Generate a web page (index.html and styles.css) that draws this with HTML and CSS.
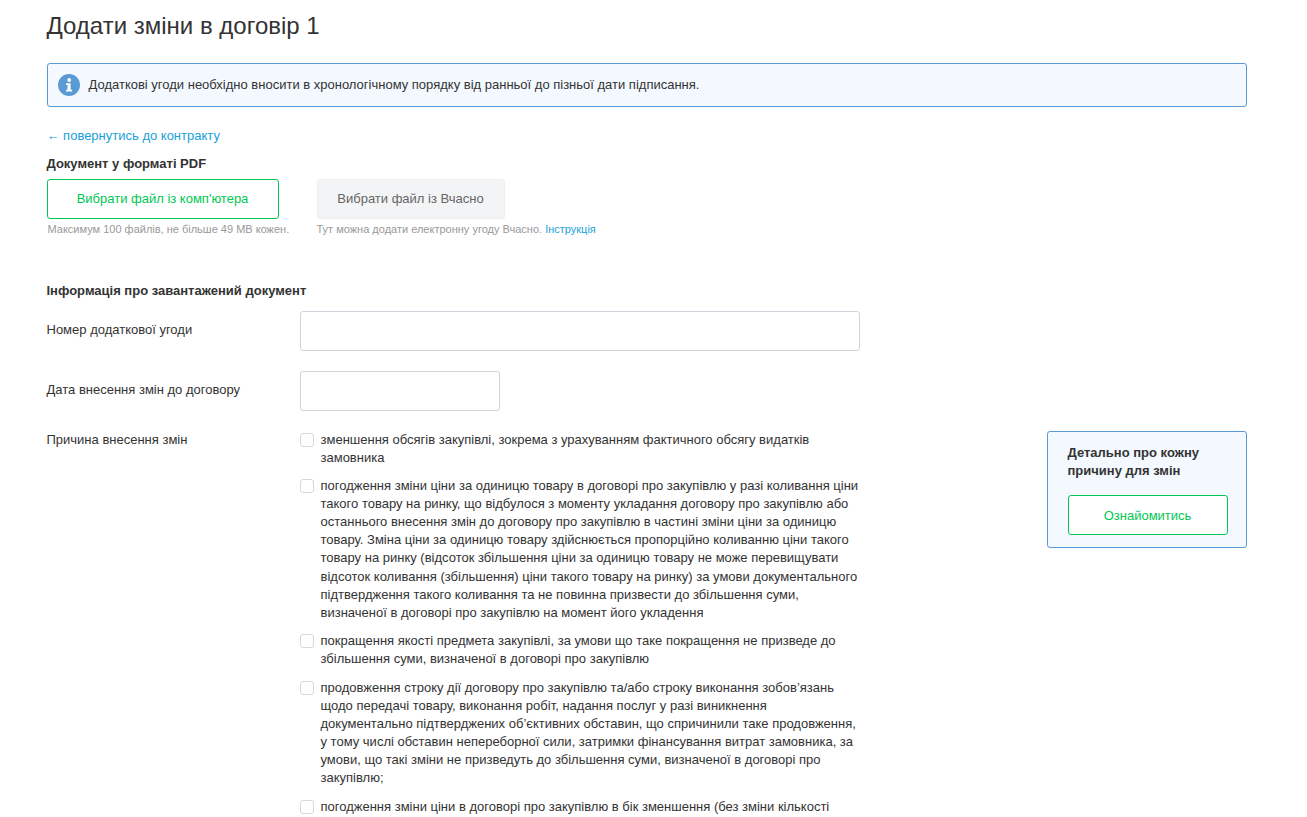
FILE: index.html
```html
<!DOCTYPE html>
<html lang="uk">
<head>
  <meta charset="UTF-8" />
  <title>Додати зміни в договір 1</title>
  <link rel="stylesheet" href="styles.css">
</head>
<body>
  <div class="container">
    <h1>Додати зміни в договір 1</h1>

    <div class="notice">
      <svg class="notice-icon" viewBox="0 0 22 22" width="22" height="22">
        <circle cx="11" cy="11" r="11" fill="#5b9bd5"/>
        <circle cx="11.2" cy="6" r="1.9" fill="#fff"/>
        <path d="M8 9.2h4.6v6.6h1.5v1.7H8v-1.7h1.5v-4.9H8z" fill="#fff"/>
      </svg>
      <span>Додаткові угоди необхідно вносити в хронологічному порядку від ранньої до пізньої дати підписання.</span>
    </div>

    <a class="back-link" href="#">← повернутись до контракту</a>

    <div class="section-title">Документ у форматі PDF</div>
    <div class="upload-row">
      <div class="upload-col">
        <button class="btn btn-green btn-upload">Вибрати файл із комп'ютера</button>
        <div class="hint hint-first">Максимум 100 файлів, не більше 49 МВ кожен.</div>
      </div>
      <div class="upload-col">
        <button class="btn btn-gray">Вибрати файл із Вчасно</button>
        <div class="hint">Тут можна додати електронну угоду Вчасно. <a href="#">Інструкція</a></div>
      </div>
    </div>

    <div class="section-title info-title">Інформація про завантажений документ</div>

    <div class="form-row">
      <label for="agreementNumber">Номер додаткової угоди</label>
      <input class="input-wide" type="text" id="agreementNumber" />
    </div>
    <div class="form-row">
      <label for="changeDate">Дата внесення змін до договору</label>
      <input class="input-short" type="text" id="changeDate" />
    </div>

    <div class="reason-row">
      <div class="reason-label">Причина внесення змін</div>
      <ul class="reason-list">
        <li><span class="check"></span><span>зменшення обсягів закупівлі, зокрема з урахуванням фактичного обсягу видатків замовника</span></li>
        <li><span class="check"></span><span>погодження зміни ціни за одиницю товару в договорі про закупівлю у разі коливання ціни такого товару на ринку, що відбулося з моменту укладання договору про закупівлю або останнього внесення змін до договору про закупівлю в частині зміни ціни за одиницю товару. Зміна ціни за одиницю товару здійснюється пропорційно коливанню ціни такого товару на ринку (відсоток збільшення ціни за одиницю товару не може перевищувати відсоток коливання (збільшення) ціни такого товару на ринку) за умови документального підтвердження такого коливання та не повинна призвести до збільшення суми, визначеної в договорі про закупівлю на момент його укладення</span></li>
        <li><span class="check"></span><span>покращення якості предмета закупівлі, за умови що таке покращення не призведе до збільшення суми, визначеної в договорі про закупівлю</span></li>
        <li><span class="check"></span><span>продовження строку дії договору про закупівлю та/або строку виконання зобов’язань щодо передачі товару, виконання робіт, надання послуг у разі виникнення документально підтверджених об’єктивних обставин, що спричинили таке продовження, у тому числі обставин непереборної сили, затримки фінансування витрат замовника, за умови, що такі зміни не призведуть до збільшення суми, визначеної в договорі про закупівлю;</span></li>
        <li><span class="check"></span><span>погодження зміни ціни в договорі про закупівлю в бік зменшення (без зміни кількості товару та/або якості товару)</span></li>
      </ul>
      <div class="side-card">
        <div class="side-title">Детально про кожну причину для змін</div>
        <button class="btn btn-green btn-side">Ознайомитись</button>
      </div>
    </div>
  </div>
</body>
</html>
```

FILE: styles.css
```css
html, body {
  height: 817px;
  overflow: hidden;
}

body {
  margin: 0;
  font-family: "Liberation Sans", Arial, sans-serif;
  font-size: 13px;
  line-height: 1.4;
  color: #333;
  background: #fff;
}

.container {
  width: 1200px;
  margin-left: 46.5px;
}

h1 {
  margin: 0;
  padding-top: 11px;
  font-size: 24px;
  line-height: 30px;
  font-weight: normal;
}

.notice {
  display: flex;
  align-items: center;
  gap: 9px;
  height: 42px;
  margin-top: 22px;
  padding-left: 10px;
  background: #f3f9ff;
  border: 1px solid #5b9bd5;
  border-radius: 3px;
}

.back-link {
  display: block;
  margin-top: 20px;
  color: #1a9fd9;
  text-decoration: none;
}

.section-title {
  margin-top: 10px;
  font-weight: bold;
}

.upload-row {
  display: flex;
  margin-top: 5.6px;
}

.upload-col {
  width: 270px;
}

.upload-col + .upload-col {
  width: 400px;
}

.btn {
  display: block;
  height: 40px;
  padding: 0;
  font-family: inherit;
  font-size: 13px;
  border-radius: 3px;
  background: #fff;
}

.btn-green {
  color: #00c853;
  border: 1px solid #00c853;
}

.btn-upload {
  width: 232px;
}

.btn-gray {
  width: 188px;
  color: #666;
  background: #f3f4f5;
  border: 1px solid #eeeff0;
}

.hint {
  margin-top: 3px;
  font-size: 11px;
  color: #999;
}

.hint-first {
  padding-left: 1px;
}

.hint a {
  color: #1a9fd9;
  text-decoration: none;
}

.info-title {
  margin-top: 44.4px;
}

.form-row {
  display: flex;
  margin-top: 11px;
  margin-bottom: 20px;
}

.form-row + .form-row {
  margin-top: 0;
}

.form-row label {
  width: 253px;
  padding-top: 10px;
}

.form-row input {
  box-sizing: border-box;
  height: 40px;
  border: 1px solid #d3d1db;
  border-radius: 3px;
}

.input-wide {
  width: 560px;
}

.input-short {
  width: 200px;
}

.reason-row {
  display: flex;
  align-items: flex-start;
}

.reason-label {
  width: 253px;
}

.reason-list {
  width: 560px;
  margin: -0.35px 0 0;
  padding: 0;
  list-style: none;
}

.reason-list li {
  display: flex;
  margin-bottom: 10px;
}

.reason-list li:first-child {
  margin-bottom: 9.7px;
}

.check {
  flex: none;
  box-sizing: border-box;
  width: 14px;
  height: 14px;
  margin: 2px 7px 0 0;
  border: 1px solid #d8d6e0;
  border-radius: 3px;
}

.side-card {
  box-sizing: border-box;
  width: 200px;
  height: 117px;
  margin-left: 187px;
  padding: 12px 18px 0 20px;
  background: #f3f9ff;
  border: 1px solid #5b9bd5;
  border-radius: 3px;
}

.side-title {
  font-weight: bold;
}

.btn-side {
  width: 160px;
  margin-top: 15px;
}
```
